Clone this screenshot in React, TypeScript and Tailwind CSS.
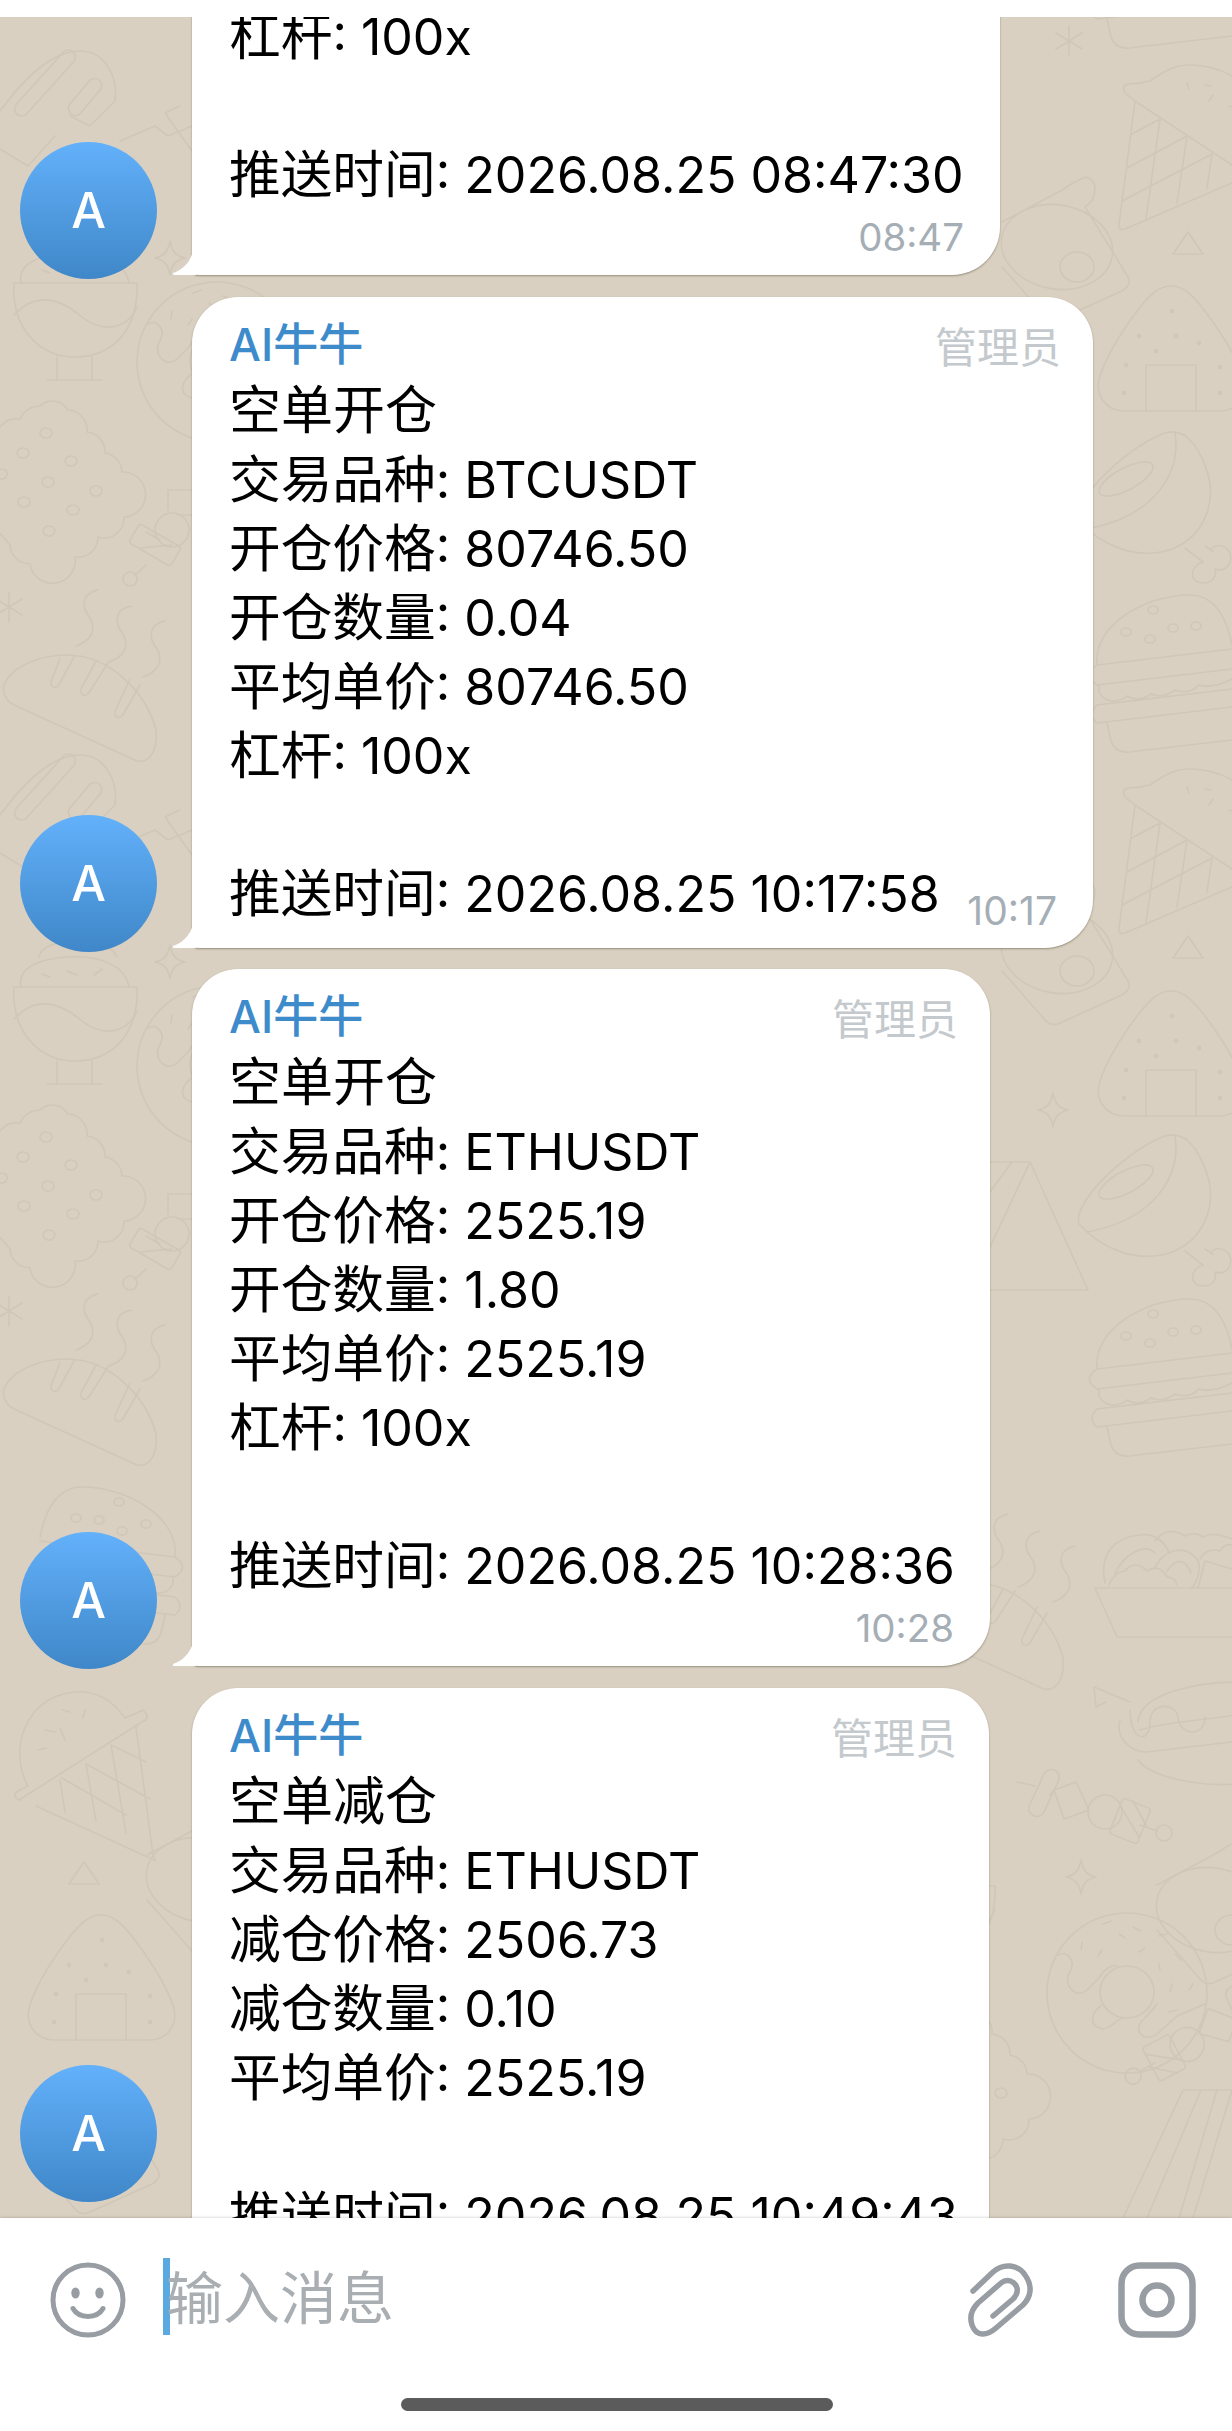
import React from "react";

function Doodles() {
  return (
    <svg className="absolute left-0 top-[-17px] w-[1232px] h-[2431px]" viewBox="0 0 1232 2431" fill="none" stroke="#d0c7b8" strokeWidth="1.6" strokeLinecap="round" strokeLinejoin="round">
      <defs>
        <g id="cone">
          <path d="M18 36 L2 160 Q2 166 8 164 L115 118 M18 36 L115 100 M43 54 L29 154 M70 71 L60 138 M95 89 L90 123 M15 69 L43 54 M10 103 L70 71 M5 136 L95 89" />
          <path d="M18 36 L8 28 Q4 20 12 19 Q22 19 33 16 C50 4 60 0 73 0 C90 0 105 5 115 11" />
          <path d="M70 18 l2 6 M88 20 l6 1 M96 30 l-4 6 M112 42 l3 -1" />
        </g>
        <g id="coneL">
          <path d="M36 116 L154 170 Q157 173 153 165 L136 37 M19 110 L145 30 M111 55 L126 143 M86 74 L96 131 M60 90 L65 122 M111 55 L146 72 M86 74 L150 109 M62 88 L126 125" />
          <path d="M19 110 Q10 105 20 100 L28 96 C8 60 25 6 75 2 C100 0 115 14 125 28 Q135 24 143 20 Q150 26 145 31" />
          <path d="M45 40 l10 2 M38 60 l8 -2 M60 38 l5 12 M62 20 l8 2 M85 20 l-2 8" />
        </g>
        <g id="oni">
          <path d="M74 0 C62 0 54 8 44 20 C28 40 10 68 3 90 C-3 108 8 125 28 125 H122 C142 125 152 108 146 90 C138 68 120 40 104 20 C94 8 86 0 74 0 Z" />
          <path d="M49 125 V79 H99 V125" />
          <g fill="#d0c7b8" stroke="none">
            <circle cx="75" cy="25" r="2.4" /><circle cx="42" cy="50" r="2.4" /><circle cx="79" cy="50" r="2.4" /><circle cx="102" cy="57" r="2.4" /><circle cx="59" cy="65" r="2.4" /><circle cx="29" cy="79" r="2.4" /><circle cx="123" cy="81" r="2.4" /><circle cx="27" cy="107" r="2.4" /><circle cx="123" cy="107" r="2.4" />
          </g>
        </g>
        <g id="ham">
          <path d="M2 90 C-5 70 45 20 85 3 C105 -5 120 10 130 40 C140 70 128 105 95 118 C60 130 25 115 2 90" />
          <path d="M98 2 C104 40 80 85 10 98" />
          <ellipse cx="49" cy="48" rx="30" ry="11" transform="rotate(-28 49 48)" />
          <path d="M108 117 L126 131 M128 115 L136 120" />
          <path d="M126 131 C112 135 112 152 126 152 C136 152 140 145 138 138 C150 142 157 130 152 120 C146 112 134 114 134 120" />
        </g>
        <g id="burger">
          <path d="M12 70 C8 30 60 0 105 0 C125 0 140 15 147 50" />
          <ellipse cx="68" cy="15" rx="5" ry="4" /><ellipse cx="41" cy="37" rx="5" ry="4" /><ellipse cx="65" cy="44" rx="5" ry="4" /><ellipse cx="88" cy="33" rx="5" ry="4" /><ellipse cx="111" cy="31" rx="5" ry="4" />
          <path d="M12 70 L147 54 M12 90 L147 74 M12 70 Q-3 80 12 90" />
          <path d="M14 90 Q12 100 22 105 Q34 108 42 101 Q54 108 66 99 Q78 104 90 95 Q104 100 114 90 Q128 94 147 84" />
          <path d="M12 110 Q2 120 12 128 L147 112 M12 110 L147 94" />
          <path d="M22 128 L26 146 Q30 158 44 157 L147 145" />
        </g>
        <g id="egg">
          <path d="M2 55 L62 23 Q75 14 86 10 Q100 14 92 34 L85 40 L128 110 Q132 118 122 124 L60 152 Q52 156 46 150 L2 100" />
          <ellipse cx="57" cy="80" rx="56" ry="42" transform="rotate(10 57 80)" />
          <ellipse cx="77" cy="100" rx="17" ry="15" />
        </g>
        <g id="bread">
          <path d="M2 30 C10 10 40 0 65 0 C110 0 145 40 154 75 C156 100 145 108 135 106 L12 50 C4 46 0 38 2 30Z" />
          <path d="M72 2 L58 28 C54 36 46 32 50 24 L58 4 M106 8 L88 36 C84 44 76 40 80 32 L94 6 M138 30 L122 58 C118 66 110 62 114 54 L128 24" />
        </g>
        <g id="cookie">
          <path d="M0 39 A20 20 0 0 1 20 31 A22 22 0 0 1 40 18 A18 18 0 0 1 68 22 A20 20 0 0 1 87 44 A20 20 0 0 1 105 65 A20 20 0 0 1 122 84 A18 18 0 0 1 124 129 A20 20 0 0 1 98 149 A20 20 0 0 1 75 169 A20 20 0 0 1 30 176 A20 20 0 0 1 10 157 L0 145" />
          <ellipse cx="46" cy="45" rx="6" ry="5" /><ellipse cx="23" cy="65" rx="6" ry="5" /><ellipse cx="71" cy="73" rx="6" ry="5" /><ellipse cx="48" cy="94" rx="6" ry="5" /><ellipse cx="96" cy="103" rx="6" ry="5" /><ellipse cx="24" cy="114" rx="6" ry="5" /><ellipse cx="73" cy="122" rx="6" ry="5" /><ellipse cx="49" cy="143" rx="6" ry="5" /><ellipse cx="2" cy="86" rx="5" ry="5" />
        </g>
        <g id="bowl">
          <path d="M7 38 H130 M7 38 C4 80 30 112 68 112 C105 112 132 85 130 38 M7 70 C30 45 55 55 75 72 C95 88 120 85 130 62 M50 112 V135 H85 V112 M40 135 H95" />
          <path d="M14 38 C10 20 30 10 60 8 C90 6 118 15 122 38 M35 25 l8 3 M60 22 l10 4 M95 20 l-8 6" />
          <path d="M32 8 C34 -12 100 -16 110 8" />
        </g>
        <g id="sq"><path d="M22 0 C4 4 6 18 14 28 C22 42 12 52 0 56" /></g>
        <g id="star"><path d="M0 -17 C2 -6 6 -2 15 0 C6 2 2 6 0 17 C-2 6 -6 2 -15 0 C-6 -2 -2 -6 0 -17Z" /></g>
        <g id="ast"><path d="M0 -15 V15 M-13 -8 L13 8 M-13 8 L13 -8" /></g>
        <g id="tri"><path d="M15 0 L30 22 H0 Z" /></g>
        <g id="skew">
          <path d="M0 17 L18 21 M33 30 L37 25 M123 60 L140 66" />
          <rect x="-8" y="-25" width="16" height="50" rx="8" transform="translate(27 28) rotate(25)" />
          <path d="M37 25 L59 17 L72 45 L47 54 Z" />
          <circle cx="88" cy="47" r="17" />
          <rect x="-15" y="-19" width="30" height="38" rx="3" transform="translate(113 56) rotate(22)" />
          <path d="M104 42 L122 72 M116 36 L130 62" />
          <circle cx="147" cy="68" r="8" />
        </g>
        <g id="skewL">
          <circle cx="130" cy="579" r="7" />
          <path d="M136 574 L146 565 M168 510 V490 H192 M180 515 H192" />
          <rect x="-24" y="-11" width="48" height="22" rx="3" transform="translate(155 545) rotate(30)" />
          <path d="M140 548 L172 545 M146 532 L160 540" />
          <circle cx="172" cy="530" r="17" />
        </g>
        <g id="sticks">
          <path d="M0 60 C30 20 55 0 80 0 C105 0 118 25 115 50 L90 75 L70 65 M0 98 L28 115 L55 85" />
          <rect x="-7" y="-42" width="14" height="84" rx="7" transform="translate(45 32) rotate(42)" />
          <rect x="-7" y="-22" width="14" height="44" rx="7" transform="translate(85 46) rotate(40)" />
          <path d="M155 75 L168 85 L192 75 M155 75 L120 90 M180 55 L165 62 L192 100" />
        </g>
        <g id="hot">
          <path d="M48 40 C50 10 110 0 150 0 M40 20 L4 5 L6 25 L16 20 M50 48 C70 40 120 38 145 33 M30 38 C25 55 40 70 56 70 L142 60" />
          <path d="M40 28 C40 60 60 62 60 40 C60 20 85 20 88 35 C90 55 115 55 115 35" />
          <path d="M48 78 C60 95 110 105 145 102" />
        </g>
        <g id="salad">
          <path d="M0 55 H137 M0 55 L22 104 H137" />
          <path d="M10 50 C4 20 20 4 45 2 C58 0 70 8 74 20 M20 40 C30 20 50 10 60 20" />
          <path d="M14 52 Q20 38 30 38 Q40 26 52 38 Q64 30 72 44 Q80 44 82 52" />
          <path d="M60 34 C70 16 88 12 100 24 C110 32 100 54 96 55 M72 38 C80 26 90 24 96 40" />
          <path d="M103 55 L110 28 L137 36" />
          <path d="M60 8 Q72 -8 90 3 Q100 -2 108 4 Q118 -2 137 6 M105 26 Q112 14 125 18 Q130 10 137 12" />
        </g>
        <g id="donut">
          <circle cx="80" cy="81" r="80" />
          <ellipse cx="80" cy="80" rx="27" ry="26" />
          <path d="M11 43 C20 38 28 48 24 58 C14 72 28 88 40 78 L52 66 C56 58 65 52 70 54" />
          <path d="M55 93 C44 100 42 112 52 116 C62 120 68 108 76 106 M110 92 C104 100 100 104 94 110 C86 122 100 130 110 122 L130 104 L158 92" />
          <path d="M56 12 l8 -3 M35 30 l-1 8 M55 38 l-4 6 M72 22 l6 4 M86 15 l8 4 M92 40 l6 -4 M112 24 l8 -2 M128 42 l6 6 M112 52 l1 6 M125 72 l-2 8 M146 72 l-4 6 M122 100 l8 -2" />
        </g>
        <g id="bacon">
          <path d="M60 0 H109 M60 0 L0 128 M78 0 L24 128 M94 0 L56 128 M109 0 L70 128" />
        </g>
        <g id="bigtri">
          <path d="M40 0 L98 128 H0 M0 0 H40 M22 0 L0 30 M40 0 L0 85" />
        </g>
      </defs>
      <use href="#cone" x="1117" y="65" />
      <use href="#cone" x="1117" y="769" />
      <use href="#tri" x="1173" y="232" />
      <use href="#tri" x="1173" y="936" />
      <use href="#oni" x="1097" y="286" />
      <use href="#oni" x="1097" y="991" />
      <use href="#ham" x="1077" y="431" />
      <use href="#ham" x="1077" y="1134" />
      <use href="#burger" x="1085" y="-109" />
      <use href="#burger" x="1085" y="595" />
      <use href="#burger" x="1085" y="1299" />
      <use href="#egg" x="1000" y="167" />
      <use href="#egg" x="1000" y="871" />
      <use href="#ast" x="1069" y="41" />
      <use href="#star" x="1053" y="1110" />
      <use href="#bigtri" x="990" y="1162" />
      <use href="#sq" x="1018" y="1531" />
      <use href="#sq" x="1053" y="1546" />
      <use href="#sq" x="986" y="1514" />
      <use href="#bread" x="909" y="1583" />
      <use href="#salad" x="1095" y="1533" />
      <use href="#hot" x="1090" y="1682" />
      <use href="#skew" x="1017" y="1765" />
      <use href="#star" x="1081" y="1877" />
      <use href="#donut" x="1047" y="1912" />
      <use href="#egg" x="1155" y="1830" />
      <use href="#bacon" x="1123" y="2090" />
      <use href="#skew" transform="translate(1145 2090) rotate(130 0 0) translate(-150 -50)" />
      <use href="#cookie" x="905" y="1990" />
      <use href="#bowl" transform="translate(865 1848)" />

      <use href="#bowl" x="7" y="245" />
      <use href="#bowl" x="7" y="949" />
      <use href="#cookie" x="0" y="388" />
      <use href="#cookie" x="0" y="1092" />
      <use href="#skewL" x="0" y="0" />
      <use href="#skewL" x="0" y="704" />
      <use href="#ast" x="9" y="607" />
      <use href="#ast" x="9" y="1311" />
      <use href="#sq" x="76" y="590" /><use href="#sq" x="109" y="606" /><use href="#sq" x="143" y="621" />
      <use href="#sq" x="76" y="1294" /><use href="#sq" x="109" y="1310" /><use href="#sq" x="143" y="1325" />
      <use href="#bread" x="2" y="655" />
      <use href="#bread" x="2" y="1359" />
      <use href="#sticks" x="0" y="755" />
      <use href="#sticks" x="0" y="51" />
      <use href="#donut" x="137" y="281" />
      <use href="#donut" x="137" y="985" />
      <use href="#star" x="170" y="962" />
      <use href="#star" x="170" y="258" />
      <use href="#burger" transform="translate(187 1487) scale(-1 1)" />
      <use href="#coneL" x="0" y="1690" />
      <use href="#tri" x="69" y="1862" />
      <use href="#oni" x="27" y="1915" />
      <use href="#egg" x="145" y="1800" />
      <use href="#egg" transform="translate(30 2060)" />
    </svg>
  );
}

function Tail() {
  return (
    <svg className="absolute left-[-20px] bottom-0 w-[24px] h-[30px]" viewBox="0 0 24 30">
      <path d="M22 0 C21 14 13 24 1 28 Q0 30 3 30 H24 V0 Z" fill="#fff" />
    </svg>
  );
}

function Avatar({ extra }: { extra: string }) {
  return (
    <div className={`w-[137px] h-[137px] shrink-0 rounded-full bg-gradient-to-b from-[#63b1fb] to-[#3f87c8] flex items-center justify-center text-white text-[49px] font-medium leading-none ${extra}`}>
      A
    </div>
  );
}

function Line({ text }: { text: string }) {
  const idx = text.indexOf(":");
  if (idx < 0) return <span className="text-[52px]">{text}</span>;
  return (
    <>
      <span className="text-[51.7px]">{text.slice(0, idx)}</span>
      {text.slice(idx)}
    </>
  );
}

function Msg({ width, lines, time, inlineTime, admin = true, avatarClass }: {
  width: string; lines: string[]; time?: string; inlineTime?: boolean; admin?: boolean; avatarClass: string;
}) {
  return (
    <div className="flex items-end pl-5 gap-[35px]">
      <Avatar extra={avatarClass} />
      <div className={`relative bg-white ${width} ${admin ? "rounded-t-[46px] pt-[22px]" : ""} rounded-br-[48px] rounded-bl-[6px] shadow-[0_1px_2px_rgba(70,60,40,0.45)] pl-[37px] pr-[36px]`}>
        <Tail />
        {admin && (
          <div className="flex justify-between items-center h-[52px] mb-[5px] -mr-[4px]">
            <span className="text-[45px] leading-[52px] font-medium text-[#3e8bcb]">AI牛牛</span>
            <span className="text-[42px] leading-[52px] pt-[6px] text-[#c4c9cd]">管理员</span>
          </div>
        )}
        {lines.map((l, i) => (
          <div key={i} className="h-[69px] leading-[69px] text-[50.1px] text-black whitespace-pre relative">
            <Line text={l} />
            {inlineTime && i === lines.length - 1 && (
              <span className="absolute right-0 top-[30px] text-[39px] leading-[44px] text-[#a6aeb5]">{time}</span>
            )}
          </div>
        ))}
        {!inlineTime && time && (
          <div className="flex justify-end h-[66px] pt-[6px] text-[38.5px] leading-[44px] text-[#a6aeb5]">{time}</div>
        )}
        {inlineTime && <div className="h-[20px]" />}
      </div>
    </div>
  );
}

export default function App() {
  return (
    <div className="w-[1232px] h-[2431px] flex flex-col bg-white overflow-hidden font-['Inter','Noto_Sans_CJK_SC',sans-serif]">
      <div className="h-[17px] bg-white shrink-0 relative z-10" />
      <div className="relative h-[2201px] shrink-0 overflow-hidden bg-[#d9d0c1]">
        <Doodles />
        <div className="relative flex flex-col gap-[21.5px] -mt-[15px]">
          <Msg width="w-[808px]" admin={false} lines={["杠杆: 100x", "", "推送时间: 2026.08.25 08:47:30"]} time="08:47" avatarClass="-mb-[3.5px]" />
          <Msg width="w-[901px]" inlineTime lines={["空单开仓", "交易品种: BTCUSDT", "开仓价格: 80746.50", "开仓数量: 0.04", "平均单价: 80746.50", "杠杆: 100x", "", "推送时间: 2026.08.25 10:17:58"]} time="10:17" avatarClass="-mb-[4.5px]" />
          <Msg width="w-[798px]" lines={["空单开仓", "交易品种: ETHUSDT", "开仓价格: 2525.19", "开仓数量: 1.80", "平均单价: 2525.19", "杠杆: 100x", "", "推送时间: 2026.08.25 10:28:36"]} time="10:28" avatarClass="-mb-[3px]" />
          <Msg width="w-[797px]" lines={["空单减仓", "交易品种: ETHUSDT", "减仓价格: 2506.73", "减仓数量: 0.10", "平均单价: 2525.19", "", "推送时间: 2026.08.25 10:49:43"]} time="10:49" avatarClass="mb-[113.5px]" />
        </div>
      </div>
      <div className="relative flex-1 bg-white shadow-[0_-1px_2px_rgba(0,0,0,0.12)]">
        <div className="flex items-center h-[164px]">
          <svg className="ml-[50px] w-[76px] h-[76px]" viewBox="0 0 76 76" fill="none" stroke="#979da3" strokeWidth="5" strokeLinecap="round">
            <circle cx="38" cy="38" r="35" />
            <ellipse cx="25.5" cy="31" rx="4.2" ry="5.5" fill="#979da3" stroke="none" />
            <ellipse cx="49.5" cy="31" rx="4.2" ry="5.5" fill="#979da3" stroke="none" />
            <path d="M23 46.5 C29 57 47 57 53 46.5" />
          </svg>
          <div className="ml-[37px] mb-[8px] w-[7px] h-[77px] bg-[#5aa9e0]" />
          <span className="text-[57px] leading-[77px] -ml-[4px] pt-[4px] mb-[8px] text-[#a9aeb3]">输入消息</span>
          <svg className="ml-auto w-[110px] h-[100px]" viewBox="0 0 110 100" fill="none" stroke="#979da3" strokeWidth="5.5" strokeLinecap="round" strokeLinejoin="round">
            <path d="M24 41 L44 22 C54 13 69 14 76 25 C84 36 82 47 74 55 L47 78 C38 86 27 87 23 75 C20 66 23 59 29 53 L52 33 C58 28 66 31 68 38 C69 42 67 46 64 49 L44 66" />
          </svg>
          <svg className="ml-[59px] mr-[36px] w-[78px] h-[76px]" viewBox="0 0 78 76" fill="none" stroke="#979da3" strokeWidth="6.5">
            <rect x="3.5" y="3.5" width="71" height="69" rx="18" />
            <circle cx="39" cy="38" r="14.5" />
          </svg>
        </div>
        <div className="absolute left-[401px] top-[180px] w-[432px] h-[13px] rounded-[7px] bg-[#5b5b5b]" />
      </div>
    </div>
  );
}
